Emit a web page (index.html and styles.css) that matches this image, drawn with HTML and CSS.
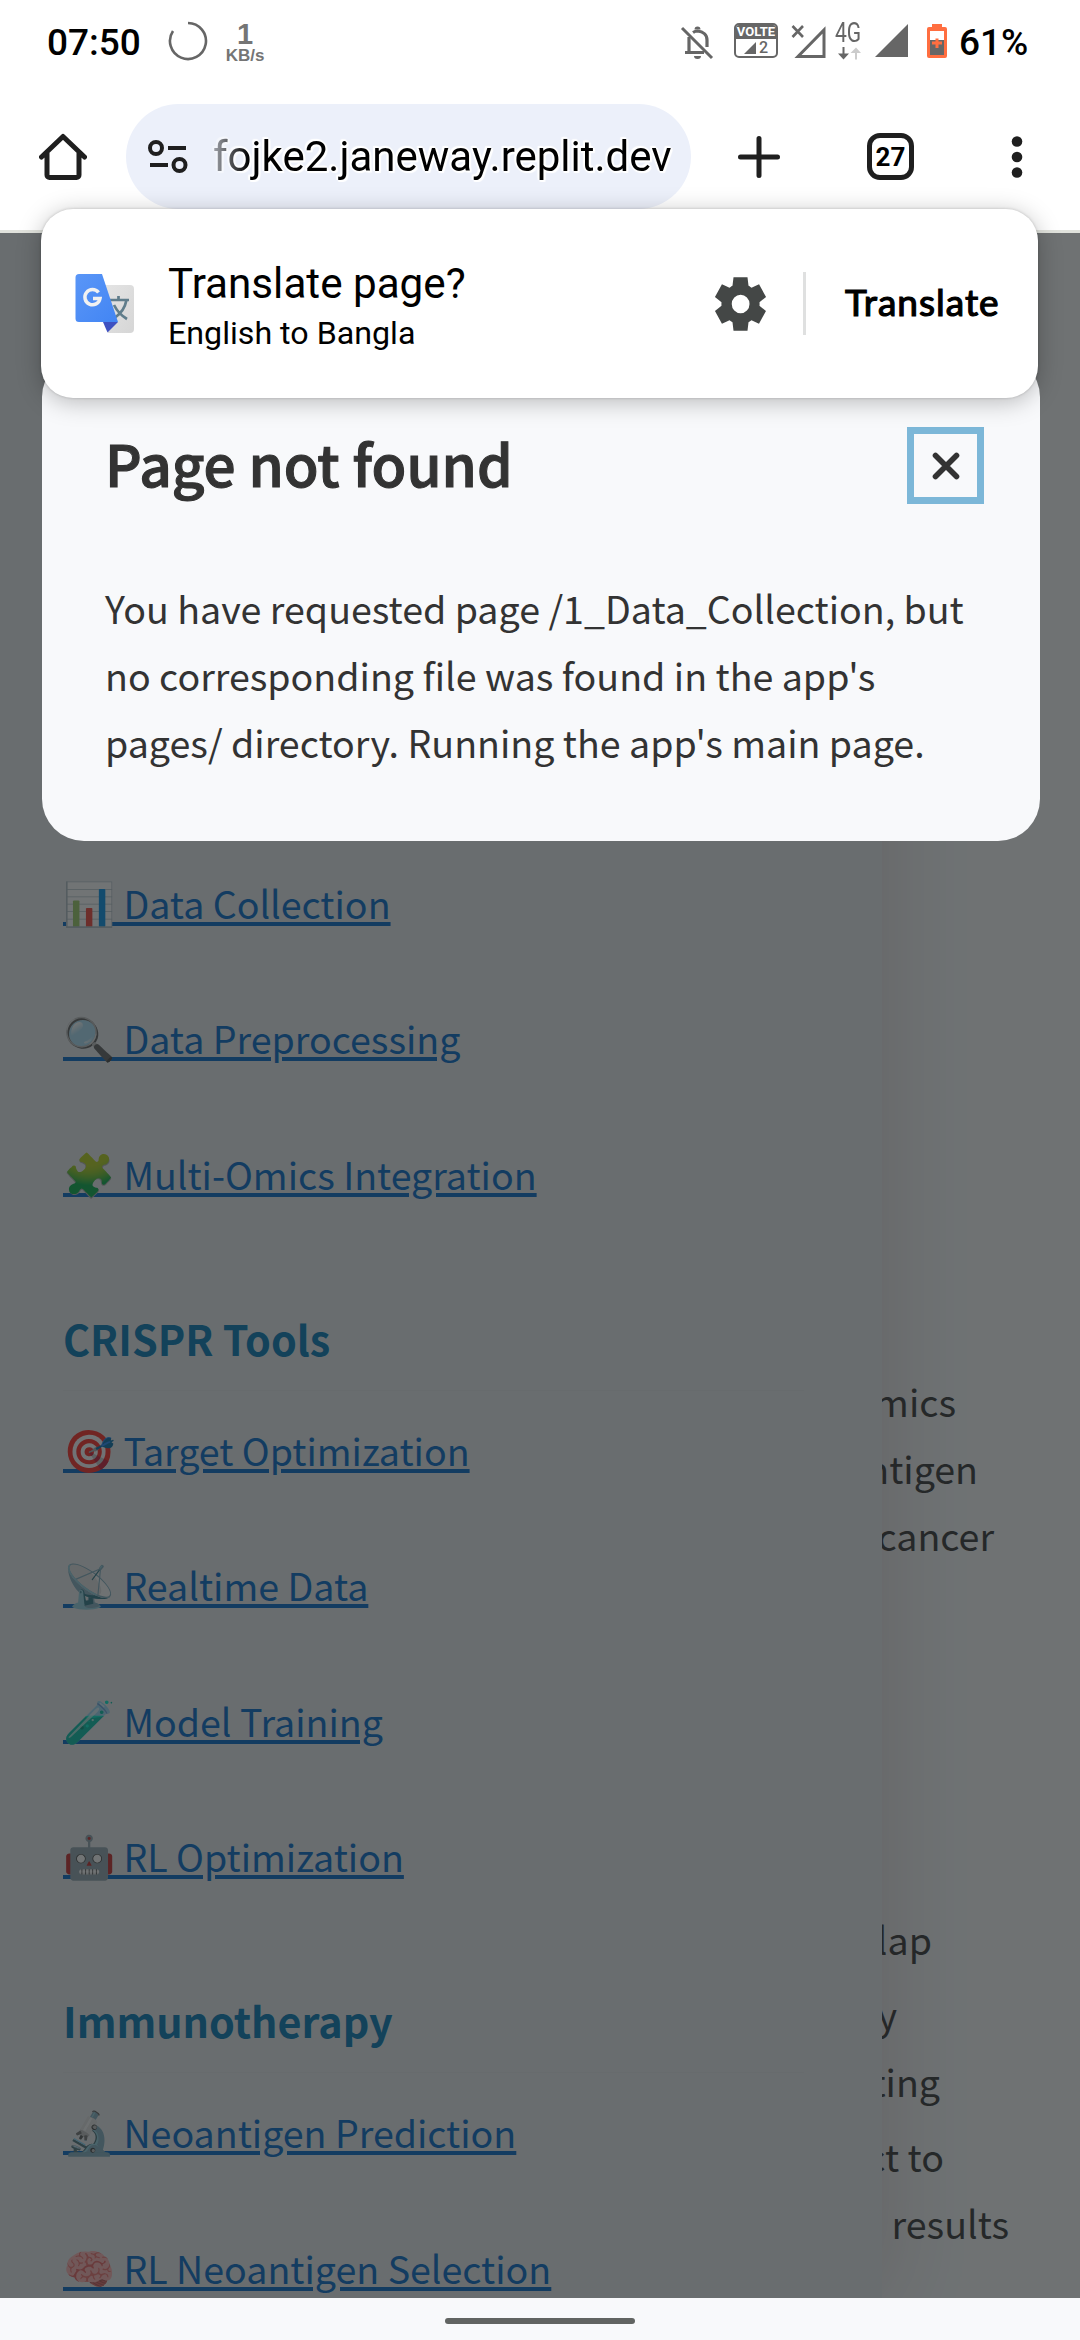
FILE: index.html
```html
<!DOCTYPE html>
<html lang="en">
<head>
<meta charset="utf-8">
<title>Page not found</title>
<link rel="stylesheet" href="styles.css">
</head>
<body>
<div class="screen">
  <header class="status">
    <span class="clock">07:50</span>
    <svg class="ring" width="40" height="40" viewBox="0 0 40 40"><path d="M20 2a18 18 0 1 1-15 8" fill="none" stroke="#666" stroke-width="2.6"/></svg>
    <span class="rate"><b class="rate-num">1</b><b class="rate-unit">KB/s</b></span>
    <span class="spacer"></span>
    <svg class="bell" width="34" height="36" viewBox="0 0 34 36" fill="none" stroke="#666"><path d="M9 12v15M5 27.500H24M27 22v-7c0-5-3.500-8.500-9.500-9-2 0-3 .5-4.500 1.500" stroke-width="3.200"/><path d="M2 3l30 30" stroke-width="3"/><path d="M14.500 4.500a3 3 0 0 1 6 0zM14 31h7a3.500 3 0 0 1-7 0z" fill="#666" stroke="none"/></svg>
    <span class="volte"><span class="volte-top">VOLTE</span><span class="volte-bottom"><svg width="12" height="12" viewBox="0 0 12 12"><path d="M12 0v12H0z" fill="#666"/></svg>2</span></span>
    <svg class="nosim" width="36" height="36" viewBox="0 0 36 36" fill="none" stroke="#666"><path d="M33 6v26.500H7z" stroke-width="3"/><path d="M1.500 2l10.500 11M12 2L1.500 13" stroke-width="2.600"/></svg>
    <span class="net"><span class="net-label">4G</span><svg width="26" height="14" viewBox="0 0 26 14"><path d="M7.500 0h2v6.500H14L8.500 12.500 3 6.500h4.500z" fill="#666"/><path d="M20 12.500h2V6h4L21 .5 15.500 6H20z" fill="#ccc"/></svg></span>
    <svg class="signal" width="33" height="34" viewBox="0 0 33 34"><path d="M33 0v33H0z" fill="#666"/></svg>
    <svg class="battery" width="20" height="34" viewBox="0 0 20 34"><path d="M5 0h10v3h3a2 2 0 0 1 2 2v27a2 2 0 0 1-2 2H2a2 2 0 0 1-2-2V5a2 2 0 0 1 2-2h3z" fill="#ff6e40"/><path d="M3 7h14v9H3z" fill="#fff"/><path d="M3 16h14v15H3z" fill="#666"/><path d="M8.500 14.500h3v3H15v3h-3.500V24h-3v-3.500H5v-3h3.500z" fill="#ff6e40"/></svg>
    <span class="percent">61%</span>
  </header>

  <nav class="toolbar">
    <svg class="home" width="48" height="48" viewBox="0 0 48 48"><path d="M2.500 24L24 3.500 45.500 24M8 20v22a2.500 2.500 0 0 0 2.500 2.500h27A2.500 2.500 0 0 0 40 42V20" fill="none" stroke="#1f1f1f" stroke-width="5" stroke-linejoin="round" stroke-linecap="round"/></svg>
    <div class="omnibox">
      <svg class="tune" width="40" height="34" viewBox="0 0 40 34" fill="none" stroke="#1f1f1f" stroke-width="4"><circle cx="8" cy="8" r="6"/><path d="M20 8h18M2 25h18"/><circle cx="31.500" cy="25" r="6"/></svg>
      <span class="url">fojke2.janeway.replit.dev</span>
    </div>
    <svg class="plus" width="42" height="42" viewBox="0 0 42 42"><path d="M21 2.500v37M2.500 21h37" stroke="#1f1f1f" stroke-width="5" stroke-linecap="round"/></svg>
    <span class="tabs">27</span>
    <svg class="dots" width="12" height="44" viewBox="0 0 12 44" fill="#1f1f1f"><circle cx="6" cy="6.500" r="5.300"/><circle cx="6" cy="22" r="5.300"/><circle cx="6" cy="37.500" r="5.300"/></svg>
  </nav>

  <section class="page">
    <main class="content">
      <p class="line l1">mics</p>
      <p class="line l2">ntigen</p>
      <p class="line l3">cancer</p>
      <p class="line l4">lap</p>
      <p class="line l5">y</p>
      <p class="line l6">ting</p>
      <p class="line l7">ct to</p>
      <p class="line l8">results</p>
    </main>
    <aside class="sidebar">
      <a class="link"><span class="emoji">📊</span> Data Collection</a>
      <a class="link"><span class="emoji">🔍</span> Data Preprocessing</a>
      <a class="link"><span class="emoji">🧩</span> Multi-Omics Integration</a>
      <h2 class="group">CRISPR Tools</h2>
      <a class="link"><span class="emoji">🎯</span> Target Optimization</a>
      <a class="link"><span class="emoji">📡</span> Realtime Data</a>
      <a class="link"><span class="emoji">🧪</span> Model Training</a>
      <a class="link"><span class="emoji">🤖</span> RL Optimization</a>
      <h2 class="group">Immunotherapy</h2>
      <a class="link"><span class="emoji">🔬</span> Neoantigen Prediction</a>
      <a class="link"><span class="emoji">🧠</span> RL Neoantigen Selection</a>
    </aside>
    <div class="backdrop">
      <div class="dialog">
        <div class="dialog-head">
          <h1 class="dialog-title">Page not found</h1>
          <button class="close" aria-label="Close"><svg width="28" height="28" viewBox="0 0 28 28"><path d="M3.500 3.500l21 21M24.500 3.500l-21 21" stroke="#333" stroke-width="5.600" stroke-linecap="round"/></svg></button>
        </div>
        <p class="dialog-text">You have requested page /1_Data_Collection, but<br>no corresponding file was found in the app's<br>pages/ directory. Running the app's main page.</p>
      </div>
    </div>
  </section>

  <div class="translate">
    <svg class="gt" width="60" height="62" viewBox="0 0 60 62">
      <defs>
        <linearGradient id="blue" x1="0" y1="0" x2="1" y2="1"><stop offset="0" stop-color="#5a96f7"/><stop offset="1" stop-color="#4285f4"/></linearGradient>
        <linearGradient id="grey" x1="0" y1="0" x2="1" y2="1"><stop offset="0" stop-color="#e4e4e4"/><stop offset="1" stop-color="#d6d6d6"/></linearGradient>
      </defs>
      <path d="M30 12h25a4 4 0 0 1 4 4v40a4 4 0 0 1-4 4H33z" fill="url(#grey)"/>
      <path d="M35 27h19M43.500 23v4M51.500 27c-1.500 8-6 14-12 18M39 32c3 6 8 11 13 14" fill="none" stroke="#607d8b" stroke-width="2.700"/>
      <path d="M28 49h15L32.500 59.500z" fill="#3f51c1"/>
      <path d="M4 1h23L43 49H4a3.500 3.500 0 0 1-3.500-3.500V4.500A3.500 3.500 0 0 1 4 1z" fill="url(#blue)"/>
      <path d="M23.500 19.500a7.600 7.600 0 1 0 1.500 6h-7" fill="none" stroke="#f1f1f1" stroke-width="3.500"/>
    </svg>
    <div class="translate-text">
      <div class="translate-title">Translate page?</div>
      <div class="translate-sub">English to Bangla</div>
    </div>
    <svg class="gear" width="61" height="64" viewBox="0 0 24 24" preserveAspectRatio="none"><path fill="#444746" d="m9.250 22-.4-3.200q-.325-.125-.612-.3-.288-.175-.563-.375L4.700 19.375l-2.750-4.750 2.575-1.950Q4.500 12.500 4.500 12.337v-.675q0-.162.025-.337L1.950 9.375l2.750-4.750 2.975 1.250q.275-.2.575-.375.3-.175.6-.3l.4-3.200h5.500l.4 3.200q.325.125.613.3.287.175.562.375l2.975-1.250 2.750 4.750-2.575 1.950q.025.175.025.337v.675q0 .163-.05.338l2.575 1.950-2.750 4.750-2.950-1.250q-.275.2-.575.375-.3.175-.6.3l-.4 3.200Zm2.800-6.500q1.450 0 2.475-1.025Q15.550 13.450 15.550 12q0-1.450-1.025-2.475Q13.500 8.500 12.050 8.500q-1.475 0-2.488 1.025Q8.550 10.550 8.550 12q0 1.450 1.012 2.475Q10.575 15.500 12.050 15.500Z"/></svg>
    <span class="rule"></span>
    <span class="translate-action">Translate</span>
  </div>

  <footer class="navbar"><span class="handle"></span></footer>
</div>
</body>
</html>
```

FILE: styles.css
```css
* { box-sizing: border-box; }
body { margin: 0; background: #fff; }
h1, h2, p { margin: 0; }
svg { display: block; flex: none; }

.screen {
  position: relative;
  display: flex;
  flex-direction: column;
  width: 1080px;
  height: 2340px;
  overflow: hidden;
  font-family: Roboto, sans-serif;
  color: #000;
}

/* Status bar */
.status {
  display: flex;
  align-items: flex-start;
  height: 104px;
  padding: 0 54px 0 47px;
  white-space: nowrap;
}
.clock, .percent { margin-top: 21px; font-size: 37px; line-height: 44px; font-weight: 500; }
.clock { width: 94px; }
.ring { margin: 21px 0 0 27px; }
.rate {
  display: flex;
  flex-direction: column;
  align-items: center;
  width: 40px;
  margin: 20px 0 0 17px;
  font-family: "Liberation Sans", sans-serif;
  color: #757575;
}
.rate-num { font-size: 29px; line-height: 28px; }
.rate-unit { font-size: 17px; line-height: 16px; }
.spacer { flex: 1; }
.bell { margin: 25px 20px 0 0; }
.volte {
  display: flex;
  flex-direction: column;
  width: 44px;
  height: 35px;
  margin: 23px 13px 0 0;
  border: 2px solid #666;
  border-radius: 5px;
  color: #666;
  overflow: hidden;
}
.volte-top {
  height: 15px;
  background: #666;
  color: #fff;
  font-size: 13px;
  font-weight: 700;
  line-height: 14px;
  text-align: center;
}
.volte-bottom {
  display: flex;
  align-items: center;
  justify-content: center;
  gap: 3px;
  height: 17px;
  font-size: 16px;
  font-weight: 500;
}
.nosim { margin: 24px 8px 0 0; }
.net { display: flex; flex-direction: column; width: 28px; margin: 20px 12px 0 0; }
.net-label { font-size: 27px; line-height: 27px; color: #666; transform: scaleX(.78); transform-origin: 0 0; }
.signal { margin: 24px 19px 0 0; }
.battery { margin: 24px 12px 0 0; }
.percent { width: 67px; }

/* Browser toolbar */
.toolbar { display: flex; align-items: center; height: 105px; padding: 0 56px 0 39px; flex: none; }
.omnibox {
  display: flex;
  align-items: center;
  width: 565px;
  height: 105px;
  margin: 0 47px 0 39px;
  padding-left: 22px;
  border-radius: 53px;
  background: #ecf0fa;
}
.url {
  margin-left: 19px;
  padding: 0 6px;
  font-size: 42px;
  line-height: 50px;
  white-space: nowrap;
  text-shadow: 2px 0 1px #fff, -2px 0 1px #fff, 0 2px 1px #fff, 0 -2px 1px #fff, 2px 2px 1px #fff, -2px -2px 1px #fff;
  -webkit-mask-image: linear-gradient(90deg, rgba(0,0,0,.2) 0, #000 42px);
  mask-image: linear-gradient(90deg, rgba(0,0,0,.2) 0, #000 42px);
}
.tabs {
  width: 47px;
  height: 47px;
  margin: 0 97px 0 87px;
  border: 5px solid #1f1f1f;
  border-radius: 13px;
  font-size: 26px;
  font-weight: 700;
  line-height: 38px;
  text-align: center;
}

/* Web page behind the dialog */
.page {
  position: relative;
  height: 2068px;
  margin-top: 21px;
  border-top: 3px solid #e0e2dc;
  background: #f8f9fa;
  overflow: hidden;
  font-family: "Noto Sans CJK SC", "Noto Sans", sans-serif;
  color: #333;
}
.content { padding-top: 1134px; text-align: right; }
.line { font-size: 37.6px; line-height: 67.2px; }
.l1 { padding-right: 124px; }
.l2 { padding-right: 102px; }
.l3 { padding-right: 86px; }
.l4 { margin-top: 336px; padding-right: 148px; }
.l5 { margin-top: 8px; padding-right: 183px; }
.l6 { padding-right: 140px; }
.l7 { margin-top: 8px; padding-right: 136px; }
.l8 { padding-right: 71px; }

.sidebar {
  position: absolute;
  inset: 0 auto 0 0;
  width: 882px;
  padding: 636px 78px 0 63px;
  background: #e9ecef;
  box-shadow: 0 0 84px rgba(60, 0, 0, .16);
}
.link {
  display: block;
  height: 67px;
  margin-bottom: 68.3px;
  font-size: 37.6px;
  line-height: 67px;
  white-space: nowrap;
  color: #0068c9;
  text-decoration: underline;
  text-decoration-thickness: 4px;
  text-underline-offset: 3px;
}
.emoji { font-size: 42px; line-height: 0; }
.group {
  height: 86px;
  margin: 98.5px 0 25px;
  padding-bottom: 4px;
  border-bottom: 1px solid #e4e7ea;
  font-size: 41.3px;
  font-weight: 700;
  line-height: 67px;
  color: #0077b6;
}

.backdrop {
  position: absolute;
  inset: 0;
  padding: 122px 40px 0 42px;
  background: rgba(30, 35, 36, .63);
}
.dialog { height: 486px; padding: 62px 56px 0 63px; border-radius: 42px; background: #f8f9fb; }
.dialog-head { display: flex; justify-content: space-between; align-items: center; height: 97px; }
.dialog-title {
  padding-bottom: 8px;
  font-size: 56.7px;
  font-weight: 500;
  line-height: 76px;
  white-space: nowrap;
  -webkit-text-stroke: 1.1px #333;
}
.close {
  display: flex;
  align-items: center;
  justify-content: center;
  width: 77px;
  height: 77px;
  padding: 0;
  border: 7px solid #7cb7d8;
  background: none;
}
.dialog-text { margin-top: 60px; font-size: 37.6px; line-height: 67.2px; white-space: nowrap; }

/* Translate prompt */
.translate {
  position: absolute;
  left: 41px;
  top: 209px;
  display: flex;
  align-items: center;
  width: 997px;
  height: 189px;
  padding: 0 39px 0 34px;
  border-radius: 32px;
  background: #fff;
  box-shadow: 0 4px 24px rgba(0, 0, 0, .26), 0 0 3px rgba(0, 0, 0, .2);
  white-space: nowrap;
}
.translate-text { flex: 1; margin-left: 33px; padding-top: 8px; }
.translate-title { font-size: 42.2px; line-height: 50px; }
.translate-sub { font-size: 32.2px; line-height: 48px; }
.rule { width: 3px; height: 63px; margin: 0 39px 0 32px; background: #dfe0e0; }
.translate-action {
  width: 154px;
  padding-bottom: 4px;
  font-family: Lato, Inter, sans-serif;
  font-size: 37px;
  letter-spacing: 1px;
  -webkit-text-stroke: 1.2px #000;
}

/* Gesture bar */
.navbar { display: flex; justify-content: center; height: 42px; padding-top: 20px; background: #f8f9fb; }
.handle { width: 190px; height: 6px; border-radius: 3px; background: #616462; }
```
